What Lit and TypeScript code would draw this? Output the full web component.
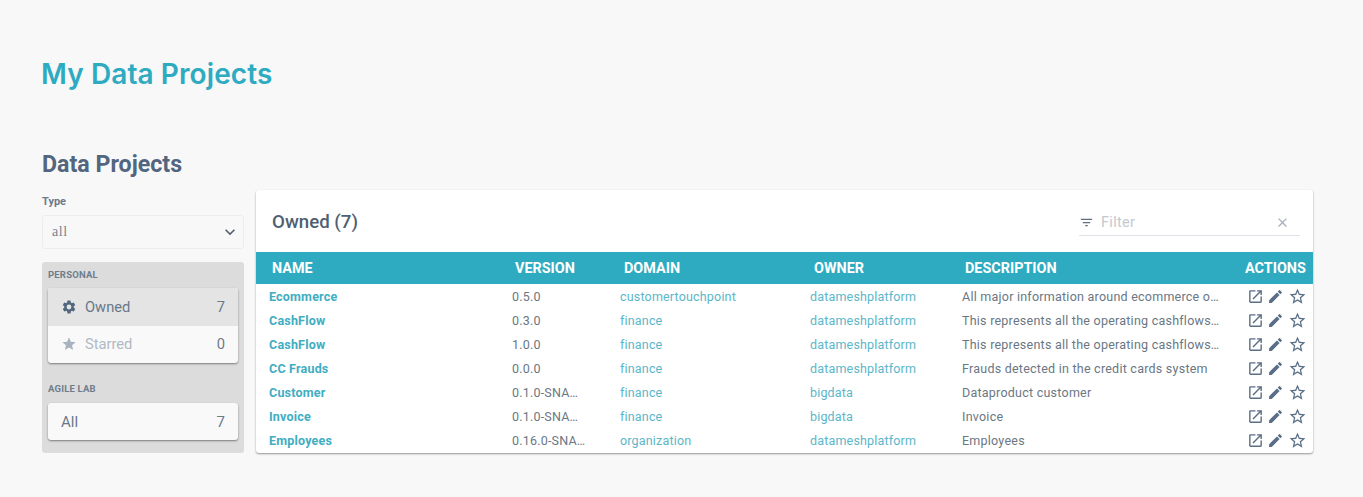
import { LitElement, html, css, svg } from "lit";
import { customElement } from "lit/decorators.js";

const rows = [
  ["Ecommerce", "0.5.0", "customertouchpoint", "datameshplatform", "All major information around ecommerce orders and customers"],
  ["CashFlow", "0.3.0", "finance", "datameshplatform", "This represents all the operating cashflows of the company"],
  ["CashFlow", "1.0.0", "finance", "datameshplatform", "This represents all the operating cashflows of the company"],
  ["CC Frauds", "0.0.0", "finance", "datameshplatform", "Frauds detected in the credit cards system"],
  ["Customer", "0.1.0-SNAPSHOT", "finance", "bigdata", "Dataproduct customer"],
  ["Invoice", "0.1.0-SNAPSHOT", "finance", "bigdata", "Invoice"],
  ["Employees", "0.16.0-SNAPSHOT", "organization", "datameshplatform", "Employees"],
];

const icon = (d: unknown, cls = "") =>
  html`<svg class=${cls} viewBox="0 0 24 24" aria-hidden="true">${d}</svg>`;

const openIcon = svg`<path d="M19 19H5V5h7V3H5a2 2 0 0 0-2 2v14a2 2 0 0 0 2 2h14a2 2 0 0 0 2-2v-7h-2v7zM14 3v2h3.59l-9.83 9.83 1.41 1.41L19 6.41V10h2V3h-7z"/>`;
const pencilIcon = svg`<path d="M3 17.25V21h3.75L17.81 9.94l-3.75-3.75L3 17.25zM20.71 7.04a1 1 0 0 0 0-1.41l-2.34-2.34a1 1 0 0 0-1.41 0l-1.83 1.83 3.75 3.75 1.83-1.83z"/>`;
const starOutline = svg`<path d="M22 9.24l-7.19-.62L12 2 9.19 8.63 2 9.24l5.46 4.73L5.82 21 12 17.27 18.18 21l-1.63-7.03L22 9.24zM12 15.4l-3.76 2.27 1-4.28-3.32-2.88 4.38-.38L12 6.1l1.71 4.04 4.38.38-3.32 2.88 1 4.28L12 15.4z"/>`;
const starFilled = svg`<path d="M12 17.27 18.18 21l-1.64-7.03L22 9.24l-7.19-.61L12 2 9.19 8.63 2 9.24l5.46 4.73L5.82 21z"/>`;
const gear = svg`<path d="M19.14 12.94a7.5 7.5 0 0 0 .06-.94 7.5 7.5 0 0 0-.06-.94l2.03-1.58a.5.5 0 0 0 .12-.64l-1.92-3.32a.5.5 0 0 0-.61-.22l-2.39.96a7 7 0 0 0-1.62-.94l-.36-2.54a.5.5 0 0 0-.49-.42h-3.84a.5.5 0 0 0-.49.42l-.36 2.54a7.3 7.3 0 0 0-1.62.94l-2.39-.96a.5.5 0 0 0-.61.22L2.71 8.84a.5.5 0 0 0 .12.64l2.03 1.58a7.7 7.7 0 0 0 0 1.88l-2.03 1.58a.5.5 0 0 0-.12.64l1.92 3.32c.12.22.37.3.61.22l2.39-.96c.5.38 1.04.7 1.62.94l.36 2.54c.04.24.25.42.49.42h3.84c.24 0 .45-.18.49-.42l.36-2.54a7 7 0 0 0 1.62-.94l2.39.96c.24.08.49 0 .61-.22l1.92-3.32a.5.5 0 0 0-.12-.64l-2.03-1.58zM12 15.6a3.6 3.6 0 1 1 0-7.2 3.6 3.6 0 0 1 0 7.2z"/>`;
const filterIcon = svg`<path d="M10 18h4v-2h-4v2zM3 6v2h18V6H3zm3 7h12v-2H6v2z"/>`;
const closeIcon = svg`<path d="M19 6.41 17.59 5 12 10.59 6.41 5 5 6.41 10.59 12 5 17.59 6.41 19 12 13.41 17.59 19 19 17.59 13.41 12z"/>`;
const chevron = svg`<path d="M7.41 8.59 12 13.17l4.59-4.58L18 10l-6 6-6-6z"/>`;

@customElement("app-root")
export class AppRoot extends LitElement {
  static styles = css`
    :host {
      display: block;
      height: 497px;
      overflow: hidden;
      background: #f8f8f9;
      font-family: Roboto, "Liberation Sans", sans-serif;
      color: #5b6b7d;
      -webkit-font-smoothing: antialiased;
    }
    svg { fill: currentColor; display: block; }
    .title {
      margin: 0;
      padding: 56px 0 0 41px;
      font-family: Inter, sans-serif;
      font-size: 28px;
      line-height: 36px;
      font-weight: 600;
      letter-spacing: 0.1px;
      color: #2eabc0;
    }
    .subtitle {
      margin: 0;
      padding: 57px 0 0 42px;
      font-size: 23.2px;
      line-height: 30px;
      font-weight: 700;
      color: #52667e;
    }
    .body {
      display: flex;
      gap: 12px;
      align-items: flex-start;
      padding: 11px 50px 0 42px;
    }
    .side { width: 202px; flex: none; }
    .type-label {
      font-size: 11px;
      line-height: 14px;
      font-weight: 700;
      color: #6d7a8a;
      padding-top: 5px;
    }
    .select {
      margin-top: 6px;
      height: 32px;
      border: 1px solid #ededf0;
      border-radius: 3px;
      display: flex;
      align-items: center;
      justify-content: space-between;
      padding: 0 3px 0 9px;
      font-family: "Liberation Serif", serif;
      font-size: 14px;
      letter-spacing: 0.6px;
      color: #78838f;
      background: #f8f8f9;
    }
    .select svg { width: 20px; height: 20px; color: #55606c; }
    .panel {
      margin-top: 13px;
      height: 191px;
      box-sizing: border-box;
      background: #dcdcdc;
      border-radius: 3px;
      padding: 7px 6px 0;
    }
    .group-label {
      font-size: 9.5px;
      line-height: 12px;
      font-weight: 700;
      letter-spacing: 0.2px;
      color: #6f7c8b;
    }
    .list {
      margin-top: 7px;
      border-radius: 3px;
      background: #f9f9f9;
      box-shadow: 0 1px 2px rgba(0, 0, 0, 0.45);
      overflow: hidden;
    }
    .list + .group-label { margin-top: 20px; }
    .group-label + .list.last { margin-top: 8px; }
    .item {
      height: 37.5px;
      display: flex;
      align-items: center;
      padding: 0 13px 0 13px;
      font-size: 14.7px;
      color: #697889;
    }
    .item.active { background: #e4e4e4; }
    .item.muted .name { color: #b0b9c4; }
    .item svg { width: 16px; height: 16px; margin-right: 8px; color: #52667e; }
    .item.muted svg { color: #a9b3bf; }
    .item .name { flex: 1; }
    .item .count { color: #6d7a89; }
    .item.plain { height: 37px; font-size: 15px; }
    .card {
      flex: 1;
      background: #fff;
      border-radius: 3px;
      box-shadow: 0 1px 2px rgba(0, 0, 0, 0.4);
      overflow: hidden;
      height: 263px;
    }
    .card-head {
      height: 62px;
      display: flex;
      align-items: center;
      justify-content: space-between;
      padding: 0 13px 0 16px;
    }
    .card-title { font-size: 18.7px; font-weight: 500; color: #4f5f72; padding-top: 1px; }
    .filter {
      width: 221px;
      height: 28px;
      margin-top: 1px;
      padding-top: 2px;
      box-sizing: border-box;
      border-bottom: 1px solid #dfe2e6;
      display: flex;
      align-items: center;
      font-size: 14.5px;
      letter-spacing: 0.3px;
      color: #c3c9d1;
    }
    .filter svg.f { width: 15px; height: 15px; margin: 0 7px 0 0; color: #5f6f81; }
    .filter svg.x { width: 15px; height: 15px; margin-left: auto; margin-right: 10px; color: #a7afb8; }
    .row {
      display: grid;
      grid-template-columns: 256px 108px 190px 152px 275px 1fr;
      align-items: center;
    }
    .head {
      height: 32px;
      background: #2eabc0;
      color: #fff;
      font-size: 14.4px;
      font-weight: 700;
    }
    .head > div { padding-left: 3px; white-space: nowrap; }
    .head > div:first-child { padding-left: 16px; }
    .head > .pad { padding-left: 4px; }
    .head > div:last-child { padding-left: 8px; }
    .data { height: 24px; font-size: 12.5px; color: #6a7784; }
    .data > div { white-space: nowrap; overflow: hidden; text-overflow: ellipsis; min-width: 0; }
    .data > div:first-child { padding-left: 13px; font-weight: 700; letter-spacing: 0.2px; color: #40adc2; }
    .data > .ver { padding-right: 34.6px; letter-spacing: 0.2px; }
    .data > .desc { padding-right: 17px; letter-spacing: 0.24px; }
    .link { color: #5bb6c8; letter-spacing: 0.18px; }
    .actions { display: flex; align-items: center; gap: 3px; margin-left: 10px; color: #5a6f86; overflow: visible !important; }
    .actions svg { width: 17px; height: 17px; flex: none; }
    .actions svg.s { width: 19px; height: 19px; margin-left: 1px; }
  `;

  render() {
    return html`
      <h1 class="title">My Data Projects</h1>
      <h2 class="subtitle">Data Projects</h2>
      <div class="body">
        <aside class="side">
          <div class="type-label">Type</div>
          <div class="select"><span>all</span>${icon(chevron)}</div>
          <div class="panel">
            <div class="group-label">PERSONAL</div>
            <div class="list">
              <div class="item active">${icon(gear)}<span class="name">Owned</span><span class="count">7</span></div>
              <div class="item muted">${icon(starFilled)}<span class="name">Starred</span><span class="count">0</span></div>
            </div>
            <div class="group-label">AGILE LAB</div>
            <div class="list last">
              <div class="item plain"><span class="name">All</span><span class="count">7</span></div>
            </div>
          </div>
        </aside>
        <section class="card">
          <div class="card-head">
            <div class="card-title">Owned (7)</div>
            <div class="filter">${icon(filterIcon, "f")}<span>Filter</span>${icon(closeIcon, "x")}</div>
          </div>
          <div class="row head">
            <div>NAME</div><div>VERSION</div><div class="pad">DOMAIN</div><div class="pad">OWNER</div><div>DESCRIPTION</div><div>ACTIONS</div>
          </div>
          ${rows.map(
            (r) => html`<div class="row data">
              <div>${r[0]}</div>
              <div class="ver">${r[1]}</div>
              <div class="link">${r[2]}</div>
              <div class="link">${r[3]}</div>
              <div class="desc">${r[4]}</div>
              <div class="actions">${icon(openIcon)}${icon(pencilIcon)}${icon(starOutline, "s")}</div>
            </div>`
          )}
        </section>
      </div>
    `;
  }
}
